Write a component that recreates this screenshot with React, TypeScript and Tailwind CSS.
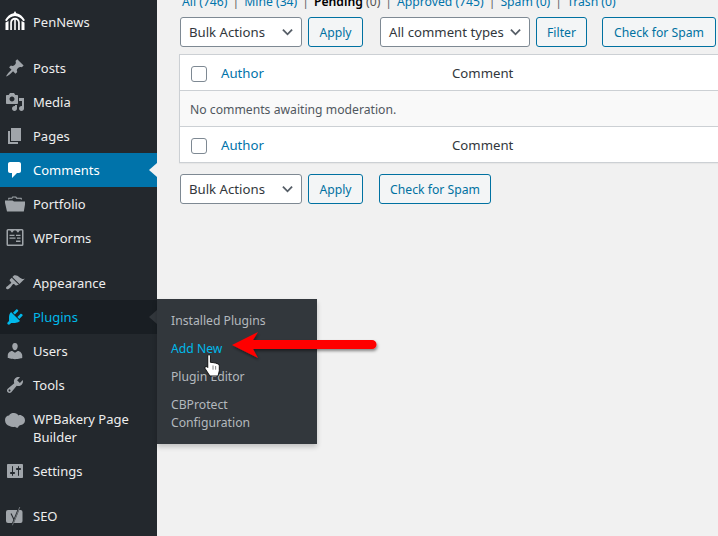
import React from "react";

const P: Record<string, string> = {
  post: "M10.44 3.02l1.82-1.82 6.36 6.35-1.83 1.82c-1.05-.68-2.48-.57-3.41.36l-.75.75c-.92.93-1.04 2.35-.35 3.41l-1.83 1.82-2.41-2.41-2.8 2.79c-.42.42-3.38 2.71-3.8 2.29s1.86-3.39 2.28-3.81l2.79-2.79L4.1 9.36l1.83-1.82c1.05.69 2.48.57 3.4-.36l.75-.75c.93-.92 1.05-2.35.36-3.41z",
  media: "M13 11V4c0-.55-.45-1-1-1h-1.67L9 1H5L3.67 3H2c-.55 0-1 .45-1 1v7c0 .55.45 1 1 1h10c.55 0 1-.45 1-1zM7 4.5c1.38 0 2.5 1.12 2.5 2.5S8.38 9.5 7 9.5 4.5 8.38 4.5 7 5.62 4.5 7 4.5zM14 6h5v10.5c0 1.38-1.12 2.5-2.5 2.5S14 17.88 14 16.5s1.12-2.5 2.5-2.5c.17 0 .34.02.5.05V9h-3V6zm-4 8.05V13h2v3.5c0 1.38-1.12 2.5-2.5 2.5S7 17.88 7 16.5 8.12 14 9.5 14c.17 0 .34.02.5.05z",
  page: "M6 15V2h10v13H6zm-1 1h8v2H3V5h2v11z",
  comment: "M5 2h9c1.1 0 2 .9 2 2v7c0 1.1-.9 2-2 2h-2l-5 5v-5H5c-1.1 0-2-.9-2-2V4c0-1.1.9-2 2-2z",
  plugin: "M13.11 4.36L9.87 7.6 8 5.73l3.24-3.24c.35-.34 1.05-.2 1.56.32.52.51.66 1.21.31 1.55zm-8 1.77l.91-1.12 9.01 9.01-1.19.84c-.71.71-2.63 1.16-3.82 1.16H6.14L4.9 17.26c-.59.59-1.54.59-2.12 0-.59-.58-.59-1.53 0-2.12l1.24-1.24v-3.88c0-1.13.4-3.19 1.09-3.89zm7.26 3.97l3.24-3.24c.34-.35 1.04-.21 1.55.31.52.51.66 1.21.31 1.55l-3.24 3.25z",
  users: "M10 9.25c-2.27 0-2.73-3.44-2.73-3.44C7 4.02 7.82 2 9.97 2c2.16 0 2.98 2.02 2.71 3.81 0 0-.41 3.44-2.68 3.44zm0 2.57L12.72 10c2.39 0 4.52 2.33 4.52 4.53v2.49s-3.65 1.13-7.24 1.13c-3.65 0-7.24-1.13-7.24-1.13v-2.49c0-2.25 1.94-4.48 4.47-4.48z",
  tools: "M16.68 9.77c-1.34 1.34-3.3 1.67-4.95.99l-5.41 6.52c-.99.99-2.59.99-3.58 0s-.99-2.59 0-3.57l6.52-5.42c-.68-1.65-.35-3.61.99-4.95 1.28-1.28 3.12-1.62 4.72-1.06l-2.89 2.89 2.82 2.82 2.86-2.87c.53 1.58.18 3.39-1.08 4.65zM3.81 16.21c.4.39 1.04.39 1.43 0 .4-.4.4-1.04 0-1.43-.39-.4-1.03-.4-1.43 0-.39.39-.39 1.03 0 1.43z",
  settings: "M18 16V4c0-.55-.45-1-1-1H3c-.55 0-1 .45-1 1v12c0 .55.45 1 1 1h14c.55 0 1-.45 1-1zM8 11h1c.55 0 1 .45 1 1s-.45 1-1 1H8v1.5c0 .28-.22.5-.5.5s-.5-.22-.5-.5V13H6c-.55 0-1-.45-1-1s.45-1 1-1h1V5.5c0-.28.22-.5.5-.5s.5.22.5.5V11zm5-2h-1c-.55 0-1-.45-1-1s.45-1 1-1h1V5.5c0-.28.22-.5.5-.5s.5.22.5.5V7h1c.55 0 1 .45 1 1s-.45 1-1 1h-1v5.5c0 .28-.22.5-.5.5s-.5-.22-.5-.5V9z",
  appearance: "M14.48 11.06L7.41 3.99l1.5-1.5c.5-.56 2.3-.47 3.51.32 1.21.8 1.43 1.28 2.91 2.1 1.18.64 2.45 1.26 4.45.85zm-.71.71L6.7 4.7 4.93 6.47c-.39.39-.39 1.02 0 1.41l1.06 1.06c.39.39.39 1.03 0 1.42-.6.6-1.43 1.11-2.21 1.69-.35.26-.7.53-1.01.84C1.43 13.23.4 14.87 1.4 15.87c.99 1 2.64-.04 3.98-1.38.31-.31.58-.66.84-1.01.58-.78 1.09-1.61 1.69-2.21.39-.39 1.02-.39 1.41 0l1.06 1.06c.39.39 1.02.39 1.41 0z",
  home: "M10 0l1.300 2.300c3.600.6 6.700 3.200 8.700 7l-1.700 1c-1.800-3.200-5-5.300-8.300-5.300s-6.500 2.100-8.300 5.300L0 9.300c2-3.800 5.100-6.400 8.700-7zM10 6.800c2.600 0 4.500 1.800 4.800 4.400V19h-1.700v-7.500c-.2-1.600-1-2.500-2.300-2.800V19H9.200V8.700c-1.300.3-2.100 1.200-2.300 2.800V19H5.200v-7.800C5.500 8.600 7.400 6.800 10 6.800zM.5 11.500L3.500 10v9h-3zM16.500 10l3 1.500V19h-3z",
  folder: "M-.5 6.500h8l1.500 1H20.500L18.800 17.500H2zM3 5.500l.4-1.800h3.300L7.300 2.500h3.900l.8 1.200h4.500l.7 1.800h-1.400l-.3-.8h-4.300l-.8-1.200H7.900l-.6 1.200H4.400l-.2.800z",
  forms: "M3 1h14a1.500 1.500 0 0 1 1.500 1.500v14A1.500 1.500 0 0 1 17 18H3a1.500 1.500 0 0 1-1.500-1.500v-14A1.500 1.500 0 0 1 3 1zM3 2.500v14h14v-14h-2.200L13 4.800 11 2.500H9L7 4.800 5.200 2.500zM4.500 6.800h5v1.300h-5zm6.500 0h4.500v1.300H11zM4.500 9.500h6v1.300h-6zm7.500 0h3.500v1.300H12zM11 12.500h4.500v1.500H11z",
  bakery: "M0 9C0 6 2 4.500 4 4.500 5 2.500 7 2 9 2c2 0 3.500 1 4.500 2.500 1-.7 2-.5 3 0C18.500 5.200 20 7 20 9.500c0 2.500-2 4-4 4.500-1.500.3-2.500 1-3 2.500-1 .5-2 .3-3-.8-1.500.5-4 .3-5.500-.7C2 14.500 0 12 0 9z",
  seo: "M3 4h12.500A2 2 0 0 1 17.500 6v9a2 2 0 0 1-2 2H3a2 2 0 0 1-2-2V6a2 2 0 0 1 2-2z",
};

function Icon({ name, cls }: { name: string; cls: string }) {
  return (
    <svg viewBox="0 0 20 20" className={`w-5 h-5 shrink-0 fill-current ${cls}`}>
      <path fillRule="evenodd" d={P[name]} />
      {name === "seo" && (
        <g fill="none" stroke="#23282d" strokeWidth="1.100">
          <path d="M6 7.500l3.200 6.500" />
          <path d="M14.500 1L7 19.500" strokeWidth="1.800" />
          <path d="M14.800 1L7.400 19.300" stroke="#a0a5aa" strokeWidth="0.600" />
        </g>
      )}
    </svg>
  );
}

function Item({ icon, children, variant, h = "h-[34px]", top, bright }: { icon: string; children: React.ReactNode; variant?: "current" | "open"; h?: string; top?: boolean; bright?: boolean }) {
  const bg = variant === "current" ? "bg-[#0073aa] text-white" : variant === "open" ? "bg-[#191e23] text-[#00b9eb]" : "text-[#eeeeee]";
  const ic = bright || variant === "current" ? "text-white" : variant === "open" ? "text-[#00b9eb]" : "text-[#a0a5aa]";
  return (
    <div className={`relative flex items-center ${h} pl-[5px] ${bg}`}>
      <span className={`w-[28px] flex justify-start ${top ? "self-start mt-[9px]" : ""} ${bright ? "-mt-[2px]" : ""}`}>
        <Icon name={icon} cls={ic} />
      </span>
      <span className="leading-[18px]">{children}</span>
      {variant === "current" && (
        <span className="absolute right-0 top-[10px] border-y-[7px] border-y-transparent border-r-[8px] border-r-[#f1f1f1]" />
      )}
      {variant === "open" && (
        <span className="absolute right-0 top-[10px] border-y-[7px] border-y-transparent border-r-[8px] border-r-[#32373c]" />
      )}
    </div>
  );
}

function Btn({ children, w }: { children: React.ReactNode; w: string }) {
  return (
    <div className={`${w} h-[30px] shrink-0 flex items-center justify-center rounded-[3px] border border-[#0071a1] bg-[#f3f5f6] text-[#0071a1] pt-[3px]`}>
      {children}
    </div>
  );
}

function Sel({ children, w, chevron }: { children: React.ReactNode; w: string; chevron: string }) {
  return (
    <div className={`${w} h-[30px] shrink-0 relative flex items-center pl-2 pt-px rounded-[3px] border border-[#7e8993] bg-white text-[#32373c] text-[13.2px]`}>
      {children}
      <svg viewBox="0 0 12 8" className={`absolute top-[10px] w-[11px] h-2 fill-none stroke-[#555d66] stroke-2 ${chevron}`}>
        <path d="M1 1.500l5 5 5-5" />
      </svg>
    </div>
  );
}

function HeadRow({ border }: { border: string }) {
  return (
    <div className={`flex items-center bg-white pt-[2px] text-[13.2px] ${border}`}>
      <span className="ml-[11px] w-4 h-4 rounded-[3px] border border-[#7e8993] bg-white shrink-0" />
      <span className="ml-[14px] w-[231px] text-[#0073aa]">Author</span>
      <span className="text-[#32373c]">Comment</span>
    </div>
  );
}

export default function App() {
  const font = { fontFamily: '"Noto Sans", "Open Sans", sans-serif' };
  return (
    <div className="relative w-[718px] h-[536px] overflow-hidden flex bg-[#f1f1f1] text-[12.2px]" style={font}>
      <aside className="w-[157px] shrink-0 bg-[#23282d] pt-[5px] text-[13px]">
        <Item icon="home" bright>PenNews</Item>
        <div className="h-3" />
        <Item icon="post">Posts</Item>
        <Item icon="media">Media</Item>
        <Item icon="page">Pages</Item>
        <Item icon="comment" variant="current">Comments</Item>
        <Item icon="folder">Portfolio</Item>
        <Item icon="forms">WPForms</Item>
        <div className="h-[11px]" />
        <Item icon="appearance">Appearance</Item>
        <Item icon="plugin" variant="open">Plugins</Item>
        <Item icon="users">Users</Item>
        <Item icon="tools">Tools</Item>
        <Item icon="bakery" h="h-[52px]" top>WPBakery Page<br />Builder</Item>
        <Item icon="settings">Settings</Item>
        <div className="h-[11px]" />
        <Item icon="seo">SEO</Item>
      </aside>

      <main className="flex-1 min-w-0 pl-[23px] overflow-hidden">
        <div className="h-[17px] -mt-[7px] mb-[7px] flex gap-[5px] whitespace-nowrap text-[#0073aa] leading-[17px] pl-[2px]">
          <span>All (746)</span><span className="text-[#666]">|</span>
          <span>Mine (34)</span><span className="text-[#666]">|</span>
          <span><b className="text-black font-semibold">Pending</b> <span className="text-[#555]">(0)</span></span><span className="text-[#666]">|</span>
          <span>Approved (745)</span><span className="text-[#666]">|</span>
          <span>Spam (0)</span><span className="text-[#666]">|</span>
          <span>Trash (0)</span>
        </div>
        <div className="w-[600px] flex">
          <Sel w="w-[122px]" chevron="right-[8px]">Bulk Actions</Sel>
          <div className="ml-[6px]"><Btn w="w-[55px]">Apply</Btn></div>
          <div className="ml-[17px]"><Sel w="w-[150px]" chevron="right-[8px]">All comment types</Sel></div>
          <div className="ml-[6px]"><Btn w="w-[51px]">Filter</Btn></div>
          <div className="ml-[15px]"><Btn w="w-[114px]">Check for Spam</Btn></div>
        </div>
        <div className="mt-[7px] -ml-px w-[600px] border border-[#ccd0d4] shadow-[0_1px_1px_rgba(0,0,0,0.04)]">
          <div className="h-[36px] grid"><HeadRow border="border-b border-[#ccd0d4]" /></div>
          <div className="h-[35px] flex items-center pl-[10px] pt-[4px] bg-[#f9f9f9] text-[#50575e]">No comments awaiting moderation.</div>
          <div className="h-[36px] grid"><HeadRow border="border-t border-[#ccd0d4]" /></div>
        </div>
        <div className="mt-[11px] flex">
          <Sel w="w-[122px]" chevron="right-[8px]">Bulk Actions</Sel>
          <div className="ml-[6px]"><Btn w="w-[55px]">Apply</Btn></div>
          <div className="ml-4"><Btn w="w-[112px]">Check for Spam</Btn></div>
        </div>
      </main>

      {/* flyout submenu */}
      <div className="absolute left-[157px] top-[299px] w-[160px] h-[145px] bg-[#32373c] shadow-[0_3px_5px_rgba(0,0,0,0.2)] pl-[14px] pt-[13px] text-[#b4b9be] leading-[18px]">
        <div className="h-[28px]">Installed Plugins</div>
        <div className="h-[28px] text-[#00b9eb]">Add New</div>
        <div className="h-[28px]">Plugin Editor</div>
        <div>CBProtect<br />Configuration</div>
      </div>

      {/* annotation arrow */}
      <svg className="absolute left-[225px] top-[328px]" width="160" height="38" viewBox="0 0 160 38">
        <defs>
          <filter id="sh" x="-10%" y="-30%" width="120%" height="170%">
            <feDropShadow dx="1" dy="2" stdDeviation="1.500" floodColor="#000" floodOpacity="0.45" />
          </filter>
        </defs>
        <path filter="url(#sh)" fill="#ff0000" d="M7 17L33 4l-5 8h119a4.500 4.500 0 0 1 0 9H28l5 9z" />
      </svg>

      {/* cursor */}
      <svg className="absolute left-[204px] top-[354px]" width="17" height="23" viewBox="0 0 16 22">
        <path fill="#fff" stroke="#000" strokeWidth="0.800" strokeLinejoin="round" d="M3.500 1.500c0-1 2.500-1 2.500 0V8l2.500.2 2.500.5 2.200.8c1 .5 1.300 1 1.300 2.500V16l-1.200 5H5.500L1 14c-.8-1.500.8-2.500 2-1.500l.5.5z" />
        <path fill="none" stroke="#555" strokeWidth="0.700" d="M8.500 11v4M11 11.500v3.500" />
      </svg>
    </div>
  );
}
